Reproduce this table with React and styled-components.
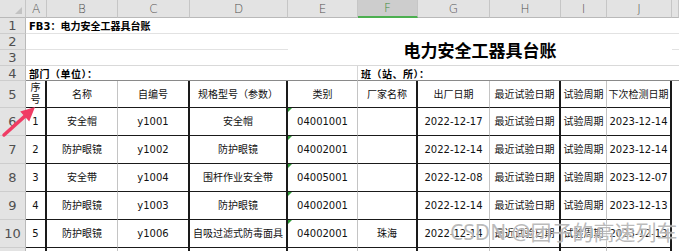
import styled, { createGlobalStyle } from "styled-components";

const GlobalStyle = createGlobalStyle`
  html, body { margin: 0; padding: 0; background: #fff; }
  body { font-family: "DejaVu Sans", "Noto Sans CJK SC", sans-serif; }
`;

const DARK = "#1a1a1a";
const LIGHT = "#c4c4c4";

const columns = ["A", "B", "C", "D", "E", "F", "G", "H", "I", "J"];
// line colour on the right edge of each table column
const edges = ["dark", "light", "dark", "dark", "light", "dark", "light", "dark", "light", "dark"];

const headers = ["序号", "名称", "自编号", "规格型号（参数）", "类别", "厂家名称", "出厂日期", "最近试验日期", "试验周期", "下次检测日期"];

const rows = [
  ["1", "安全帽", "y1001", "安全帽", "04001001", "", "2022-12-17", "最近试验日期", "试验周期", "2023-12-14"],
  ["2", "防护眼镜", "y1002", "防护眼镜", "04002001", "", "2022-12-14", "最近试验日期", "试验周期", "2023-12-14"],
  ["3", "安全带", "y1004", "围杆作业安全带", "04005001", "", "2022-12-08", "最近试验日期", "试验周期", "2023-12-07"],
  ["4", "防护眼镜", "y1003", "防护眼镜", "04002001", "", "2022-12-14", "最近试验日期", "试验周期", "2023-12-13"],
  ["5", "防护眼镜", "y1006", "自吸过滤式防毒面具", "04002001", "珠海", "2022-12-14", "最近试验日期", "试验周期", "2023-12-13"],
];

const Sheet = styled.div`
  position: relative;
  width: 679px;
  height: 251px;
  overflow: hidden;
  display: grid;
  grid-template-columns: 26px 21px 71px 72px 98px 70px 60px 72px 71px 46px 65px 7px;
  grid-template-rows: 18px 16px 16px 16px 15px 27px repeat(5, 28px) 10px;
  background: #fff;
`;

const Corner = styled.div`
  position: relative;
  background: #e3e3e3;
  border-right: 1px solid #c6c6c6;
  border-bottom: 1px solid #b9b9b9;

  &::after {
    content: "";
    position: absolute;
    right: 3px;
    bottom: 3px;
    border-left: 7px solid transparent;
    border-bottom: 7px solid #c2c2c2;
  }
`;

const ColHead = styled.div`
  display: flex;
  align-items: center;
  justify-content: center;
  font-family: "DejaVu Sans", sans-serif;
  font-size: 12px;
  font-weight: 300;
  color: ${(p) => (p.$active ? "#3d8b3d" : "#505050")};
  background: ${(p) => (p.$active ? "#cdcdcd" : "#e3e3e3")};
  border-right: 1px solid #c6c6c6;
  border-bottom: ${(p) => (p.$active ? "2px solid #4caf50" : "1px solid #b9b9b9")};
`;

const RowHead = styled.div`
  display: flex;
  align-items: center;
  justify-content: center;
  font-family: "DejaVu Sans", sans-serif;
  font-size: 13px;
  color: #505050;
  background: #e3e3e3;
  border-right: 1px solid #b9b9b9;
  border-bottom: 1px solid #cdcdcd;
`;

const Cell = styled.div`
  grid-column: span ${(p) => p.$span || 1};
  grid-row: span ${(p) => p.$rows || 1};
  display: flex;
  align-items: center;
  justify-content: ${(p) => (p.$center ? "center" : "flex-start")};
  padding-left: ${(p) => (p.$center ? 0 : 3)}px;
  font-size: ${(p) => p.$size || 10}px;
  font-weight: ${(p) => (p.$bold ? 700 : 400)};
  letter-spacing: ${(p) => (p.$wide ? "0.5px" : "0")};
  color: #000;
  white-space: nowrap;
  border-bottom: 1px solid ${(p) => p.$line || "#e2e2e2"};
  border-right: ${(p) => (p.$divider ? "1px solid #d6d6d6" : "none")};
`;

const TableCell = styled.div`
  position: relative;
  display: flex;
  align-items: center;
  justify-content: center;
  text-align: center;
  font-size: 10px;
  line-height: 13px;
  color: #111;
  white-space: nowrap;
  border-right: ${(p) => (p.$edge === "dark" ? `2px solid ${DARK}` : `1px solid ${LIGHT}`)};
  border-bottom: ${(p) => (p.$open ? "none" : `1px solid ${DARK}`)};

  ${(p) =>
    p.$flag &&
    `&::before {
      content: "";
      position: absolute;
      left: 0;
      top: 0;
      border-top: 4px solid #2e9a36;
      border-right: 4px solid transparent;
    }`}
`;

const Stacked = styled.span`
  white-space: normal;
  width: 12px;
  line-height: 12px;
`;

const Blank = styled.div`
  border-bottom: ${(p) => (p.$line ? `1px solid ${p.$line}` : "none")};
`;

const Arrow = styled.svg`
  position: absolute;
  left: 0;
  top: 100px;
  width: 42px;
  height: 42px;
  pointer-events: none;
`;

const Watermark = styled.div`
  position: absolute;
  left: 450px;
  top: 219px;
  font-family: "Noto Sans", "Noto Sans CJK SC", sans-serif;
  font-size: 21px;
  line-height: 26px;
  white-space: nowrap;
  color: rgba(120, 120, 120, 0.5);
  text-shadow: 0 0 1px rgba(255, 255, 255, 0.9), 0 0 2px rgba(255, 255, 255, 0.6);
  pointer-events: none;
`;

function App() {
  return (
    <>
      <GlobalStyle />
      <Sheet>
        <Corner />
        {columns.map((c) => (
          <ColHead key={c} $active={c === "F"}>
            {c}
          </ColHead>
        ))}
        <ColHead />

        <RowHead>1</RowHead>
        <Cell $span={11} $bold>
          FB3：电力安全工器具台账
        </Cell>

        <RowHead>2</RowHead>
        <Cell $span={4} />
        <Cell $span={6} $rows={2} $center $bold $size={17} $line="#d9d9d9">
          电力安全工器具台账
        </Cell>
        <Blank $line="#e2e2e2" />

        <RowHead>3</RowHead>
        <Cell $span={4} $line="#d9d9d9" />
        <Blank $line="#d9d9d9" />

        <RowHead>4</RowHead>
        <Cell $span={5} $bold $wide $line="#8a8a8a" $divider>
          部门（单位）：
        </Cell>
        <Cell $span={5} $bold $wide $line="#8a8a8a">
          班（站、所）：
        </Cell>
        <Blank $line="#8a8a8a" />

        <RowHead>5</RowHead>
        {headers.map((h, i) => (
          <TableCell key={h} $edge={edges[i]}>
            {i === 0 ? <Stacked>{h}</Stacked> : h}
          </TableCell>
        ))}
        <Blank />

        {rows.map((r, ri) => (
          <>
            <RowHead key={`h${ri}`}>{ri + 6}</RowHead>
            {r.map((v, i) => (
              <TableCell key={`${ri}-${i}`} $edge={edges[i]} $flag={i === 4}>
                {v}
              </TableCell>
            ))}
            <Blank key={`k${ri}`} />
          </>
        ))}

        <RowHead />
        {edges.map((e, i) => (
          <TableCell key={`last${i}`} $edge={e} $open />
        ))}
        <Blank />

        <Arrow viewBox="0 0 42 42">
          <line x1="4" y1="35" x2="25.5" y2="15.6" stroke="#f03c64" strokeWidth="3.5" strokeLinecap="round" />
          <polygon points="35,7 29.2,21.4 20.2,11.4" fill="#f03c64" />
        </Arrow>
        <Watermark>CSDN @团子的高速列车</Watermark>
      </Sheet>
    </>
  );
}

export default App;
